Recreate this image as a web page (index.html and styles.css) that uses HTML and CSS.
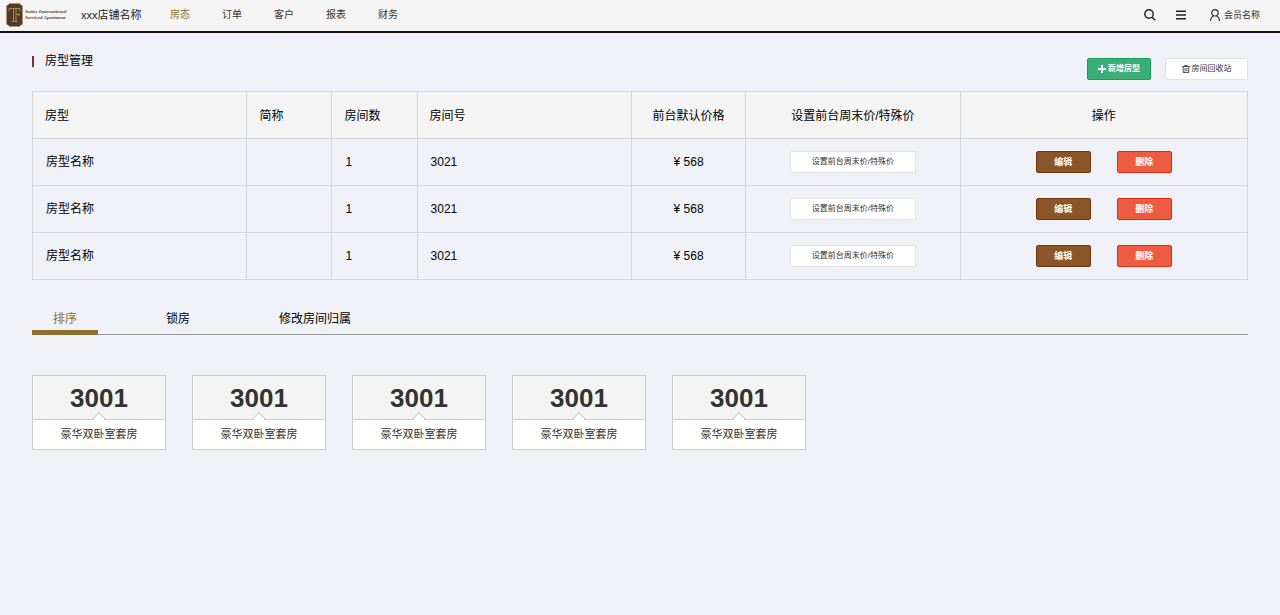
FILE: index.html
```html
<!DOCTYPE html>
<html lang="zh-CN">
<head>
<meta charset="utf-8">
<title>房型管理</title>
<link rel="stylesheet" href="styles.css">
</head>
<body>
<header class="topbar">
  <a class="logo" href="#" aria-label="Suites International">
    <svg class="emblem" width="17" height="24" viewBox="0 0 17 24">
      <path d="M3 0.500h11q0 2 2.500 2v19q-2.500 0-2.500 2h-11q0-2-2.500-2v-19q2.500 0 2.500-2z" fill="#57391f"/>
      <path d="M3 8V5.500h11V8M7.500 5.500v13M10 5.500v13M6 18.500h5.500M10 11.500h3M13 10v3" fill="none" stroke="#a58c5c" stroke-width="1"/>
    </svg>
    <span class="logo-text"><span>Suites International</span><span>Serviced Apartment</span></span>
  </a>
  <span class="shop">xxx店铺名称</span>
  <nav class="nav">
    <a class="nav-link active" href="#">房态</a>
    <a class="nav-link" href="#">订单</a>
    <a class="nav-link" href="#">客户</a>
    <a class="nav-link" href="#">报表</a>
    <a class="nav-link" href="#">财务</a>
  </nav>
  <div class="tools">
    <button class="icon-button" aria-label="搜索"><svg width="12" height="12" viewBox="0 0 12 12" fill="none" stroke="#222" stroke-width="1.400"><circle cx="5" cy="5" r="4.200"/><path d="M8.200 8.200l3 3"/></svg></button>
    <button class="icon-button" aria-label="菜单"><svg width="10" height="10" viewBox="0 0 10 10" stroke="#222" stroke-width="1.400"><path d="M0 1.200h10M0 5h10M0 8.800h10"/></svg></button>
    <a class="member" href="#"><svg width="10" height="12" viewBox="0 0 10 12" fill="none" stroke="#333" stroke-width="1.200"><circle cx="5" cy="3.800" r="3.200"/><path d="M3.700 6.700C1.800 7.500.7 9.500.6 12M6.300 6.700c1.900.8 3 2.800 3.100 5.300"/></svg>会员名称</a>
  </div>
</header>
<main class="page">
  <div class="heading">
    <h1 class="title">房型管理</h1>
    <div class="actions">
      <button class="button add"><svg width="8" height="8" viewBox="0 0 8 8" stroke="#fff" stroke-width="2"><path d="M4 0v8M0 4h8"/></svg>新增房型</button>
      <button class="button bin"><svg width="8" height="8" viewBox="0 0 8 8" fill="none" stroke="#555" stroke-width="1"><path d="M0 1.500h8M2.500 1.500v-1h3v1M1.200 1.500v6h5.600v-6M3 3v3.500M5 3v3.500"/></svg>房间回收站</button>
    </div>
  </div>
  <table class="rooms">
    <colgroup><col class="c-type"><col class="c-short"><col class="c-short"><col class="c-type"><col class="c-price"><col class="c-type"><col></colgroup>
    <thead>
      <tr><th>房型</th><th>简称</th><th>房间数</th><th>房间号</th><th class="mid">前台默认价格</th><th class="mid">设置前台周末价/特殊价</th><th class="mid">操作</th></tr>
    </thead>
    <tbody>
      <tr><td>房型名称</td><td></td><td>1</td><td>3021</td><td class="mid">¥ 568</td><td class="mid"><button class="button special">设置前台周末价/特殊价</button></td><td><div class="ops"><button class="button edit">编辑</button><button class="button delete">删除</button></div></td></tr>
      <tr><td>房型名称</td><td></td><td>1</td><td>3021</td><td class="mid">¥ 568</td><td class="mid"><button class="button special">设置前台周末价/特殊价</button></td><td><div class="ops"><button class="button edit">编辑</button><button class="button delete">删除</button></div></td></tr>
      <tr><td>房型名称</td><td></td><td>1</td><td>3021</td><td class="mid">¥ 568</td><td class="mid"><button class="button special">设置前台周末价/特殊价</button></td><td><div class="ops"><button class="button edit">编辑</button><button class="button delete">删除</button></div></td></tr>
    </tbody>
  </table>
  <nav class="tabs">
    <a class="tab current" href="#">排序</a>
    <a class="tab" href="#">锁房</a>
    <a class="tab" href="#">修改房间归属</a>
  </nav>
  <div class="cards">
    <article class="card"><strong class="number">3001</strong><span class="kind">豪华双卧室套房</span></article>
    <article class="card"><strong class="number">3001</strong><span class="kind">豪华双卧室套房</span></article>
    <article class="card"><strong class="number">3001</strong><span class="kind">豪华双卧室套房</span></article>
    <article class="card"><strong class="number">3001</strong><span class="kind">豪华双卧室套房</span></article>
    <article class="card"><strong class="number">3001</strong><span class="kind">豪华双卧室套房</span></article>
  </div>
</main>
</body>
</html>
```
FILE: styles.css
```css
* { box-sizing: border-box; }
body {
  margin: 0;
  background: #f0f1f7;
  color: #000;
  font: 12px/18px "Liberation Sans", "Noto Sans CJK SC", sans-serif;
}
a { color: inherit; text-decoration: none; }
button { font-family: inherit; cursor: pointer; }
svg { flex: none; }

.topbar {
  display: flex;
  align-items: center;
  height: 33px;
  padding: 0 20px 1px 6px;
  background: #f4f4f4;
  border-bottom: 2px solid #15120f;
}
.logo { display: flex; align-items: center; gap: 2px; width: 75px; }
.logo-text {
  display: flex;
  flex-direction: column;
  color: #5b4130;
  font: italic bold 5px/6px "Liberation Serif", serif;
  white-space: nowrap;
}
.shop { color: #222; width: 89px; font-size: 11px; white-space: nowrap; }
.nav { display: flex; gap: 32px; color: #333; font-size: 10px; }
.nav-link.active { color: #8c6f2c; }
.tools { display: flex; align-items: center; gap: 20px; margin-left: auto; }
.icon-button { display: flex; padding: 0; border: 0; background: none; }
.member { display: flex; align-items: center; gap: 4px; margin-left: 4px; color: #333; font-size: 9px; }

.page { padding: 18px 32px; }
.heading { display: flex; justify-content: space-between; height: 40px; }
.title {
  display: flex;
  align-items: center;
  gap: 11px;
  height: 20px;
  margin: 0;
  font-size: 12px;
  font-weight: normal;
}
.title::before { content: ""; width: 2px; height: 11px; background: #733522; }
.actions { display: flex; gap: 14px; padding-top: 7px; }
.button {
  display: inline-flex;
  align-items: center;
  justify-content: center;
  gap: 2px;
  height: 22px;
  padding: 0;
  border: 1px solid;
  border-radius: 2px;
  font-size: 8px;
  line-height: 12px;
  white-space: nowrap;
  vertical-align: middle;
}
.add { width: 64px; background: #3bae78; border-color: #14a05a; color: #fff; font-weight: bold; }
.bin { width: 83px; background: #fff; border-color: #e0e1e4; color: #333; }

.rooms {
  width: 100%;
  table-layout: fixed;
  border-collapse: collapse;
}
.c-type { width: 17.65%; }
.c-short { width: 7%; }
.c-price { width: 9.4%; }
.rooms th, .rooms td {
  height: 47px;
  padding: 1px 12px 0;
  border: 1px solid #d5d6d8;
  font-weight: normal;
  text-align: left;
}
.rooms td { padding: 0 13px; }
.rooms th { background: #f4f4f4; }
.rooms .mid { padding-left: 0; padding-right: 0; text-align: center; }
.special { width: 126px; background: #fff; border-color: #e0e1e4; color: #333; }
.ops { display: flex; justify-content: center; gap: 26px; }
.edit, .delete { width: 55px; color: #fff; font-size: 9px; font-weight: bold; }
.edit { background: #8a5628; border-color: #6f3710; }
.delete { background: #ed5b40; border-color: #dc2c14; }

.tabs {
  display: flex;
  gap: 47px;
  height: 34px;
  margin-top: 21px;
  border-bottom: 1px solid #999;
}
.tab { height: 34px; padding: 9px 21px 0; }
.tab.current { color: #8c6f2c; border-bottom: 5px solid #8c6f2c; }

.cards { display: flex; flex-wrap: wrap; gap: 26px; margin-top: 40px; }
.card {
  width: 134px;
  border: 1px solid #ccc;
  background: #fff;
  text-align: center;
}
.number {
  display: block;
  position: relative;
  height: 44px;
  border-bottom: 1px solid #ccc;
  background: #f4f4f4;
  color: #333;
  font-size: 26px;
  line-height: 44px;
}
.number::after {
  content: "";
  position: absolute;
  left: calc(50% - 5px);
  bottom: -5px;
  width: 8px;
  height: 8px;
  border: 1px solid #ccc;
  border-right-color: transparent;
  border-bottom-color: transparent;
  background: #fff;
  background-clip: padding-box;
  transform: rotate(45deg);
}
.kind { display: block; color: #333; font-size: 11px; line-height: 29px; }
```
